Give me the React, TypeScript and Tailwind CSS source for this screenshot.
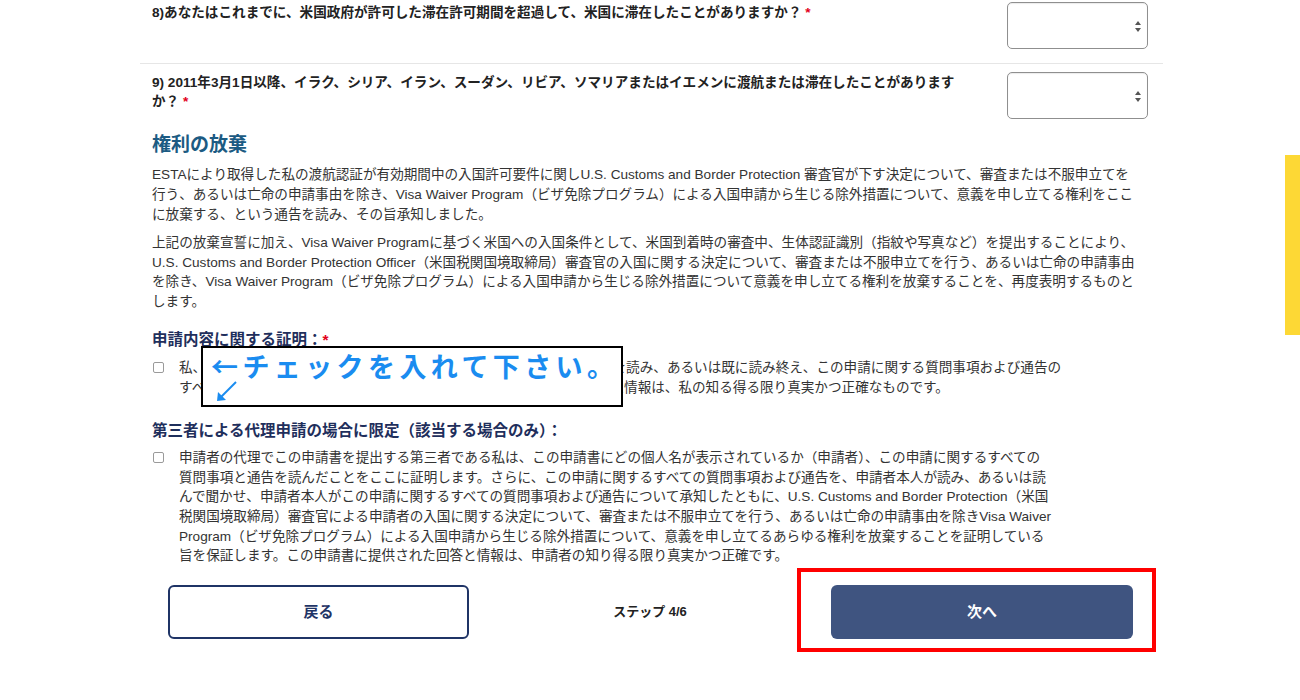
import React from 'react';

const font = "font-['Liberation_Sans','Noto_Sans_CJK_JP',sans-serif]";

// セレクトボックス（空）
function EmptySelect() {
  return (
    <div className="relative w-[141px] h-[47px] rounded-[5px] border border-[#8f8f8f] bg-white shadow-[inset_0_1px_1px_rgba(0,0,0,0.08)]">
      <svg className="absolute right-[5px] top-[17px]" width="8" height="13" viewBox="0 0 8 13">
        <path d="M4 1 L7 5 L1 5 Z" fill="#555" />
        <path d="M4 12 L7 8 L1 8 Z" fill="#555" />
      </svg>
    </div>
  );
}

function CheckBox() {
  return <span className="mt-[4px] block w-[11px] h-[11px] shrink-0 rounded-[2px] border border-[#9a9a9a] bg-white" />;
}

function Lines({ lines, className }: { lines: string[]; className?: string }) {
  return (
    <div className={className}>
      {lines.map((l, i) => (
        <div key={i} className="whitespace-nowrap">{l}</div>
      ))}
    </div>
  );
}

const waiver1 = [
  'ESTAにより取得した私の渡航認証が有効期間中の入国許可要件に関しU.S. Customs and Border Protection 審査官が下す決定について、審査または不服申立てを',
  '行う、あるいは亡命の申請事由を除き、Visa Waiver Program（ビザ免除プログラム）による入国申請から生じる除外措置について、意義を申し立てる権利をここ',
  'に放棄する、という通告を読み、その旨承知しました。',
];

const waiver2 = [
  '上記の放棄宣誓に加え、Visa Waiver Programに基づく米国への入国条件として、米国到着時の審査中、生体認証識別（指紋や写真など）を提出することにより、',
  'U.S. Customs and Border Protection Officer（米国税関国境取締局）審査官の入国に関する決定について、審査または不服申立てを行う、あるいは亡命の申請事由',
  'を除き、Visa Waiver Program（ビザ免除プログラム）による入国申請から生じる除外措置について意義を申し立てる権利を放棄することを、再度表明するものと',
  'します。',
];

const cert = [
  '私、申請者本人は、この申請書に関するすべての質問事項および各通告を読み、あるいは既に読み終え、この申請に関する質問事項および通告の',
  'すべてを理解したことをここに証明します。この申請書において提供した情報は、私の知る得る限り真実かつ正確なものです。',
];

const thirdParty = [
  '申請者の代理でこの申請書を提出する第三者である私は、この申請書にどの個人名が表示されているか（申請者）、この申請に関するすべての',
  '質問事項と通告を読んだことをここに証明します。さらに、この申請に関するすべての質問事項および通告を、申請者本人が読み、あるいは読',
  'んで聞かせ、申請者本人がこの申請に関するすべての質問事項および通告について承知したともに、U.S. Customs and Border Protection（米国',
  '税関国境取締局）審査官による申請者の入国に関する決定について、審査または不服申立てを行う、あるいは亡命の申請事由を除きVisa Waiver',
  'Program（ビザ免除プログラム）による入国申請から生じる除外措置について、意義を申し立てるあらゆる権利を放棄することを証明している',
  '旨を保証します。この申請書に提供された回答と情報は、申請者の知り得る限り真実かつ正確です。',
];

export default function App() {
  return (
    <div className={`relative min-h-[700px] overflow-hidden bg-white text-[#333] ${font}`}>
      {/* 右端の黄色タブ */}
      <div className="absolute right-0 top-[155px] w-[15px] h-[180px] bg-[#fdd835]" />

      <div className="ml-[140px] w-[1023px]">
        {/* 質問8 */}
        <div className="flex justify-between pl-3 pr-[15px] pt-[2px] h-[64px] border-b border-[#e6e6e6]">
          <p className="pt-[1px] text-[13.6px] font-bold leading-[20px] text-[#222]">
            8)あなたはこれまでに、米国政府が許可した滞在許可期間を超過して、米国に滞在したことがありますか？
            <span className="text-[#e2001a]"> *</span>
          </p>
          <EmptySelect />
        </div>

        {/* 質問9 */}
        <div className="flex justify-between pl-3 pr-[15px] pt-[8px]">
          <p className="pt-[1px] text-[13.6px] font-bold leading-[19px] text-[#222]">
            9) 2011年3月1日以降、イラク、シリア、イラン、スーダン、リビア、ソマリアまたはイエメンに渡航または滞在したことがあります
            <br />
            か？<span className="text-[#e2001a]"> *</span>
          </p>
          <EmptySelect />
        </div>

        {/* 権利の放棄 */}
        <div className="pl-3 pt-[13px]">
          <h2 className="text-[19px] font-bold leading-[26px] text-[#1c5b83]">権利の放棄</h2>
          <Lines lines={waiver1} className="mt-[7px] text-[13.6px] leading-[20px]" />
          <Lines lines={waiver2} className="mt-[8px] text-[13.6px] leading-[19.7px]" />

          {/* 申請内容に関する証明 */}
          <h3 className="mt-[17px] text-[15.5px] font-bold leading-[22px] text-[#1f2f5c]">
            申請内容に関する証明：<span className="text-[#e2001a]">*</span>
          </h3>
          <div className="relative mt-[7px] flex gap-[15px] pl-[1px]">
            <CheckBox />
            <Lines lines={cert} className="text-[13.6px] leading-[20px]" />

            {/* 注釈ボックス */}
            <div className="absolute left-[49px] top-[-12px] w-[422px] h-[61px] border-2 border-black bg-white">
              <div className="pl-[8px] font-['Noto_Sans_CJK_JP',sans-serif] text-[27px] font-bold leading-[36px] tracking-[4.4px] text-[#1a8cf0] whitespace-nowrap">
                ←チェックを入れて下さい。
              </div>
              <svg className="absolute left-[12px] top-[31px]" width="24" height="24" viewBox="0 0 24 24">
                <path d="M21 3 L4 20" stroke="#1a8cf0" strokeWidth="2" />
                <path d="M2 22 L3 13 L11 21 Z" fill="#1a8cf0" />
              </svg>
            </div>
          </div>

          {/* 第三者による代理申請 */}
          <h3 className="mt-[22px] text-[15.5px] font-bold leading-[22px] text-[#1f2f5c]">
            第三者による代理申請の場合に限定（該当する場合のみ）：
          </h3>
          <div className="mt-[6px] flex gap-[15px] pl-[1px]">
            <CheckBox />
            <Lines lines={thirdParty} className="text-[13.6px] leading-[19.7px]" />
          </div>
        </div>

        {/* ボタン */}
        <div className="mt-[2px] flex items-start">
          <button className="ml-[28px] mt-[17px] w-[301px] h-[54px] rounded-[6px] border-2 border-[#1f3466] bg-white text-[15px] font-bold text-[#1f3466]">
            戻る
          </button>
          <div className="mt-[34px] w-[328px] pl-[34px] text-center text-[13px] font-bold text-[#222]">ステップ 4/6</div>
          <div className="w-[359px] h-[84px] border-4 border-[#f00] pt-[13px]">
            <button className="ml-[30px] w-[302px] h-[54px] rounded-[6px] bg-[#3f5480] text-[15px] font-bold text-white">
              次へ
            </button>
          </div>
        </div>
      </div>
    </div>
  );
}
